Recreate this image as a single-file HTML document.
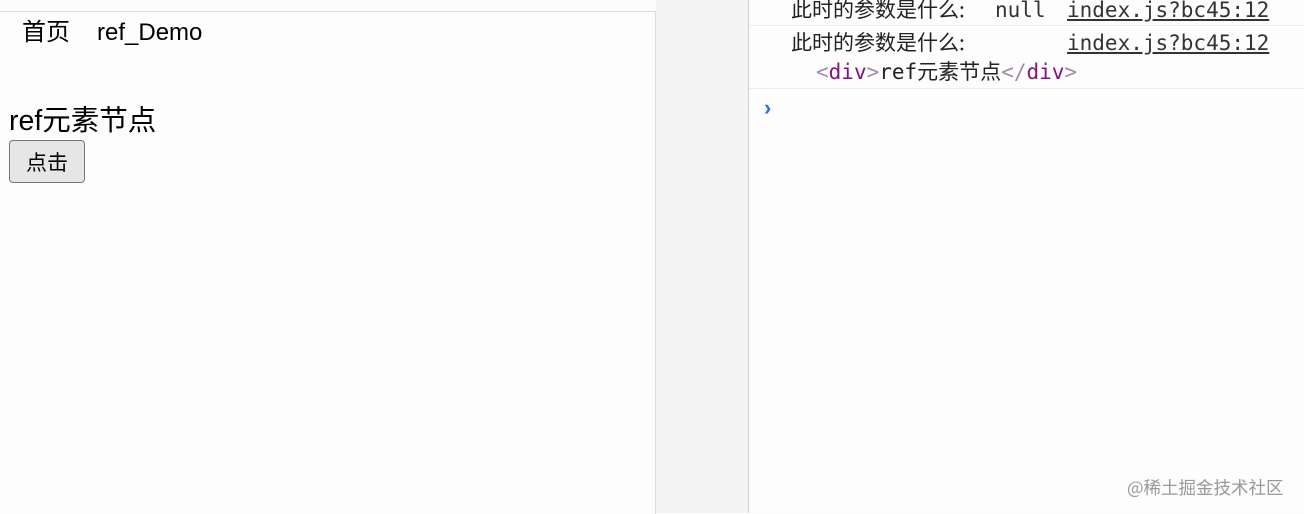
<!DOCTYPE html>
<html><head><meta charset="utf-8"><style>
body{margin:0;width:1304px;height:513px;background:#fcfcfc;position:relative;overflow:hidden;font-family:"Liberation Sans","Noto Sans CJK SC",sans-serif}
.left{position:absolute;left:0;top:11px;width:655px;height:502px;background:#fdfdfd;border-top:1px solid #dcdcdc;border-right:1px solid #d8dce4}
.gap{position:absolute;left:656px;top:0;width:92px;height:513px;background:#f4f4f4}
.con{position:absolute;left:748px;top:0;width:556px;height:513px;background:#fdfdfd;border-left:1px solid #cfcfcf}
.t{position:absolute;white-space:nowrap;line-height:1}
.m{font-family:"DejaVu Sans Mono","Liberation Mono","Noto Sans CJK SC",monospace;font-size:21px;color:#222}
.cj{font-family:"Noto Sans CJK SC",sans-serif;font-size:21px;color:#222}
.lnk{text-decoration:underline;color:#333}
.sep{position:absolute;left:749px;width:555px;border-top:1px solid #ececec}
button{position:absolute;left:9px;top:140px;width:76px;height:43px;border:1px solid #767676;border-radius:4px;background:#e6e6e6;font-size:21px;font-family:"Liberation Sans","Noto Sans CJK SC",sans-serif;padding:0}
</style></head><body>
<div class="left"></div>
<div class="gap"></div>
<div class="con"></div>
<div class="t" style="left:22px;top:21px;font-size:24px">首页<span style="margin-left:27px">ref_Demo</span></div>
<div class="t" style="left:9px;top:107px;font-size:28.5px">ref元素节点</div>
<button>点击</button>
<div class="t cj" style="left:791px;top:-1px">此时的参数是什么:</div>
<div class="t m" style="left:995px;top:0px;color:#333">null</div>
<div class="t m lnk" style="left:1067px;top:0px">index.js?bc45:12</div>
<div class="sep" style="top:25px"></div>
<div class="t cj" style="left:791px;top:32px">此时的参数是什么:</div>
<div class="t m lnk" style="left:1067px;top:33px">index.js?bc45:12</div>
<div class="t m" style="left:816px;top:62px"><span style="color:#a08ca8">&lt;</span><span style="color:#881280">div</span><span style="color:#a08ca8">&gt;</span>ref元素节点<span style="color:#a08ca8">&lt;/</span><span style="color:#881280">div</span><span style="color:#a08ca8">&gt;</span></div>
<div class="sep" style="top:88px"></div>
<div class="t" style="left:764px;top:97px;color:#2a72e0;font-size:22px;font-weight:bold">›</div>
<div class="t" style="left:1127px;top:479px;font-size:17.5px;color:#999;font-family:'Noto Sans CJK SC',sans-serif">@稀土掘金技术社区</div>
</body></html>
